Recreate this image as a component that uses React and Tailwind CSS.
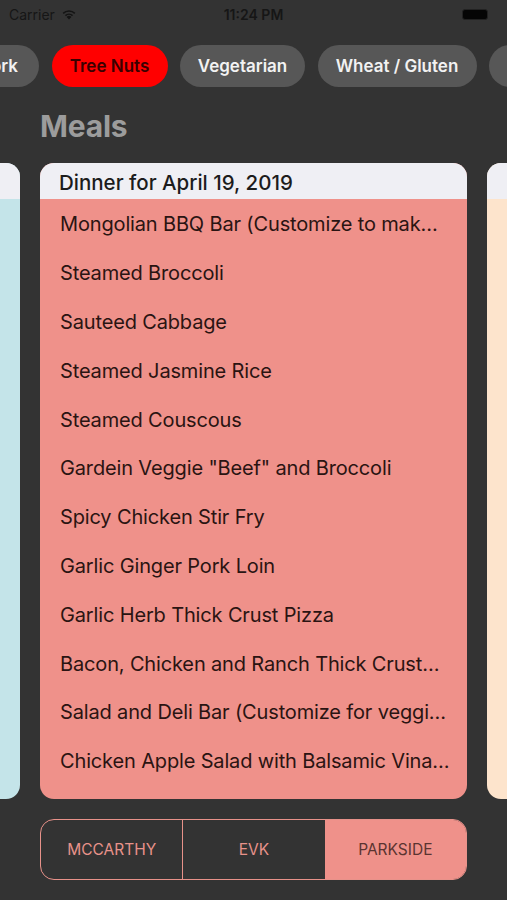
import React from "react";

const items = [
  "Mongolian BBQ Bar (Customize to mak…",
  "Steamed Broccoli",
  "Sauteed Cabbage",
  "Steamed Jasmine Rice",
  "Steamed Couscous",
  'Gardein Veggie "Beef" and Broccoli',
  "Spicy Chicken Stir Fry",
  "Garlic Ginger Pork Loin",
  "Garlic Herb Thick Crust Pizza",
  "Bacon, Chicken and Ranch Thick Crust…",
  "Salad and Deli Bar (Customize for veggi…",
  "Chicken Apple Salad with Balsamic Vina…",
];

function Wifi() {
  return (
    <svg width="16" height="12" viewBox="0 0 16 12" className="ml-[6px]">
      <path d="M8 11.5 L5.6 8.9 A3.4 3.4 0 0 1 10.4 8.9 Z" fill="#141414" />
      <path d="M3.9 7.1 A5.8 5.8 0 0 1 12.1 7.1 L11 8.2 A4.3 4.3 0 0 0 5 8.2 Z" fill="#141414" />
      <path d="M1.6 4.8 A9 9 0 0 1 14.4 4.8 L13.3 5.9 A7.5 7.5 0 0 0 2.7 5.9 Z" fill="#141414" />
    </svg>
  );
}

export default function App() {
  return (
    <div
      className="w-[507px] h-[900px] bg-[#333333] overflow-hidden flex flex-col"
      style={{ fontFamily: "Inter, 'Noto Sans', sans-serif" }}
    >
      {/* status bar */}
      <div className="h-[28px] flex items-center relative px-[9px]">
        <div className="flex items-center text-[14px] text-[#161616]">
          <span>Carrier</span>
          <Wifi />
        </div>
        <div className="absolute left-0 right-0 top-0 h-[28px] flex items-center justify-center text-[14px] font-semibold text-[#161616] pointer-events-none">
          11:24 PM
        </div>
        <div className="ml-auto mr-[10px] w-[26px] h-[11px] rounded-[3px] bg-[#050505] border border-[#222]" />
      </div>

      {/* chips */}
      <div className="mt-[17px] h-[42px] flex gap-[12.5px] ml-[-41px] shrink-0">
        {[
          ["Pork", "w-[80px]", false],
          ["Tree Nuts", "w-[116px]", true],
          ["Vegetarian", "w-[125px]", false],
          ["Wheat / Gluten", "w-[159px]", false],
        ].map(([t, w, sel]) => (
          <div
            key={t}
            className={`${w} shrink-0 h-[42px] rounded-full flex items-center justify-center pt-[2px] text-[17px] font-semibold whitespace-nowrap ${
              sel ? "bg-[#ff0000] text-[#3a0000]" : "bg-[#575757] text-[#f2f2f2]"
            }`}
          >
            {t}
          </div>
        ))}
        <div className="w-[110px] shrink-0 h-[42px] rounded-full bg-[#575757]" />
      </div>

      {/* title */}
      <div className="mt-[21px] pl-[40px] text-[30px] leading-[36px] font-bold text-[#9c9c9c] tracking-[-0.2px]">
        Meals
      </div>

      {/* cards */}
      <div className="mt-[19px] h-[636px] flex gap-[20px] ml-[-407px] shrink-0">
        <div className="w-[427px] shrink-0 rounded-[14px] overflow-hidden flex flex-col bg-[#c4e4e9]">
          <div className="h-[36px] bg-[#efeff4]" />
        </div>
        <div className="w-[427px] shrink-0 rounded-[14px] overflow-hidden flex flex-col bg-[#ef918a]">
          <div className="h-[36px] bg-[#efeff4] flex items-center pl-[19px] pt-[5px] text-[20.5px] font-medium text-[#1c1c1c]">
            Dinner for April 19, 2019
          </div>
          <div className="flex flex-col pt-[1px]">
            {items.map((t) => (
              <div
                key={t}
                className="h-[48.8px] flex items-center pl-[20px] pr-[14px] text-[20px] text-[#2a1412] whitespace-nowrap overflow-hidden tracking-[-0.15px]"
              >
                {t}
              </div>
            ))}
          </div>
        </div>
        <div className="w-[427px] shrink-0 rounded-[14px] overflow-hidden flex flex-col bg-[#fde4cc]">
          <div className="h-[36px] bg-[#efeff4]" />
        </div>
      </div>

      {/* segmented */}
      <div className="mt-[20px] mx-[40px] h-[61px] rounded-[14px] border border-[#e8928a] overflow-hidden flex text-[15.5px] shrink-0">
        <div className="flex-1 flex items-center justify-center text-[#e8928a] border-r border-[#e8928a]">
          MCCARTHY
        </div>
        <div className="flex-1 flex items-center justify-center text-[#e8928a]">EVK</div>
        <div className="flex-1 flex items-center justify-center bg-[#ef918a] text-[#5b3431]">
          PARKSIDE
        </div>
      </div>
    </div>
  );
}
